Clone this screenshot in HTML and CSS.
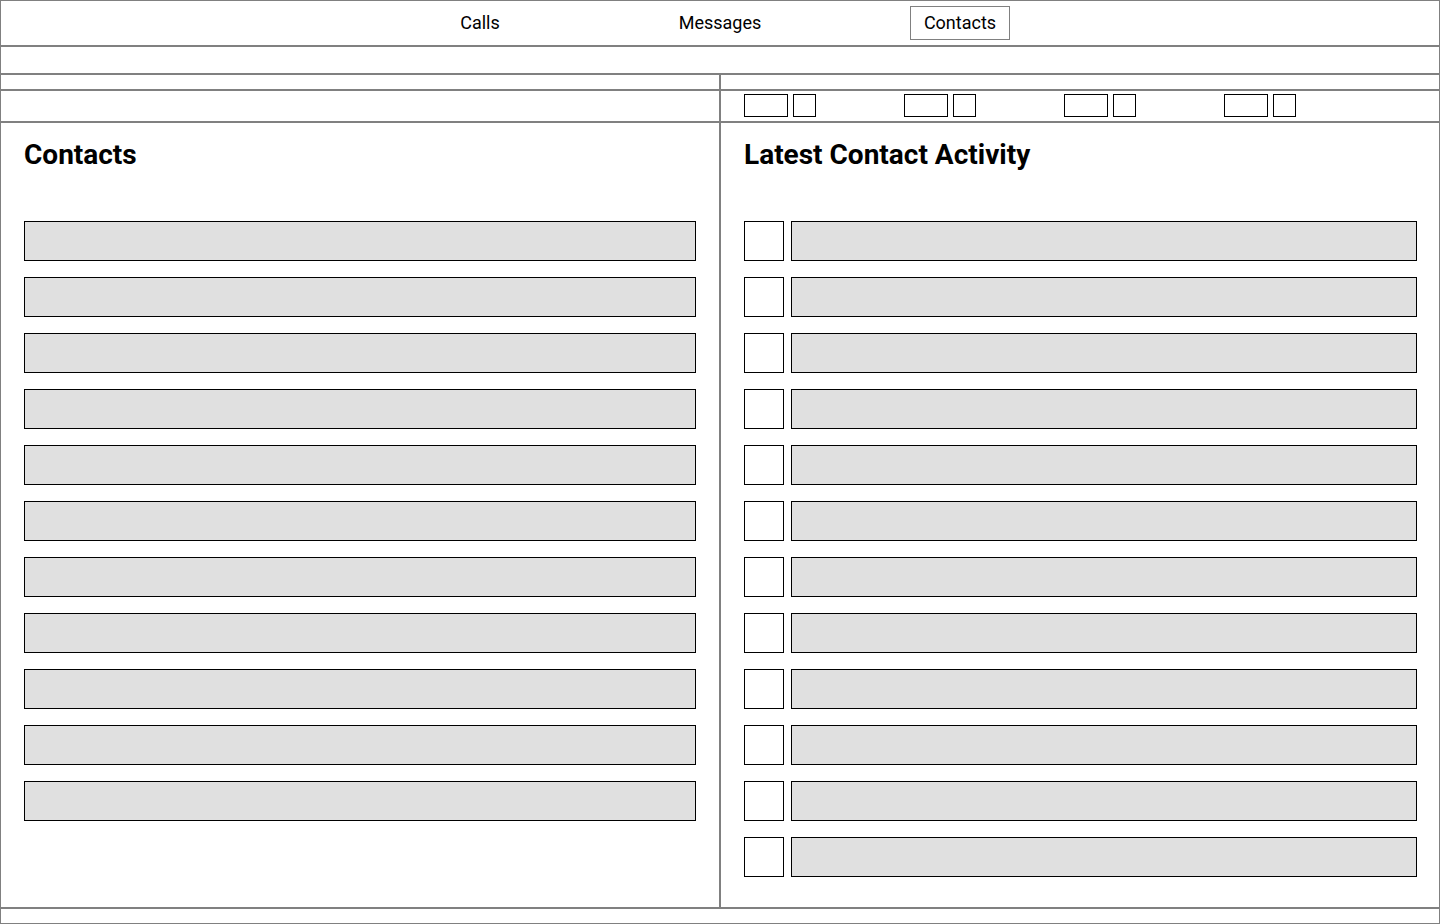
FILE: index.html
```html
<!DOCTYPE html>
<html lang="en">
<head>
<meta charset="utf-8">
<title>Contacts</title>
<link rel="stylesheet" href="styles.css">
</head>
<body>
<div class="page">
  <nav class="nav">
    <div class="nav-item"><span class="nav-label">Calls</span></div>
    <div class="nav-item"><span class="nav-label">Messages</span></div>
    <div class="nav-item"><span class="nav-label active">Contacts</span></div>
  </nav>
  <div class="band band-empty"></div>
  <div class="split band-thin">
    <div class="cell"></div>
    <div class="cell"></div>
  </div>
  <div class="split band-tools">
    <div class="cell"></div>
    <div class="cell tools">
      <div class="tool-group"><span class="tool tool-wide"></span><span class="tool tool-sq"></span></div>
      <div class="tool-group"><span class="tool tool-wide"></span><span class="tool tool-sq"></span></div>
      <div class="tool-group"><span class="tool tool-wide"></span><span class="tool tool-sq"></span></div>
      <div class="tool-group"><span class="tool tool-wide"></span><span class="tool tool-sq"></span></div>
    </div>
  </div>
  <main class="split main">
    <section class="cell panel panel-left">
      <h2 class="panel-title">Contacts</h2>
      <div class="list">
        <div class="bar"></div><div class="bar"></div><div class="bar"></div><div class="bar"></div>
        <div class="bar"></div><div class="bar"></div><div class="bar"></div><div class="bar"></div>
        <div class="bar"></div><div class="bar"></div><div class="bar"></div>
      </div>
    </section>
    <section class="cell panel panel-right">
      <h2 class="panel-title">Latest Contact Activity</h2>
      <div class="list">
        <div class="activity"><div class="avatar"></div><div class="bar"></div></div>
        <div class="activity"><div class="avatar"></div><div class="bar"></div></div>
        <div class="activity"><div class="avatar"></div><div class="bar"></div></div>
        <div class="activity"><div class="avatar"></div><div class="bar"></div></div>
        <div class="activity"><div class="avatar"></div><div class="bar"></div></div>
        <div class="activity"><div class="avatar"></div><div class="bar"></div></div>
        <div class="activity"><div class="avatar"></div><div class="bar"></div></div>
        <div class="activity"><div class="avatar"></div><div class="bar"></div></div>
        <div class="activity"><div class="avatar"></div><div class="bar"></div></div>
        <div class="activity"><div class="avatar"></div><div class="bar"></div></div>
        <div class="activity"><div class="avatar"></div><div class="bar"></div></div>
        <div class="activity"><div class="avatar"></div><div class="bar"></div></div>
      </div>
    </section>
  </main>
  <footer class="band footer"></footer>
</div>
</body>
</html>
```
FILE: styles.css
```css
* { box-sizing: border-box; }
html, body { margin: 0; padding: 0; background: #fff; }
body { font-family: Roboto, "Noto Sans", "Liberation Sans", sans-serif; color: #000; }

.page {
  width: 1440px;
  height: 924px;
  display: flex;
  flex-direction: column;
}

.nav {
  height: 46px;
  border: 1px solid #808080;
  display: flex;
  justify-content: center;
  align-items: center;
}
.nav-item {
  width: 240px;
  display: flex;
  justify-content: center;
  align-items: center;
}
.nav-label {
  font-size: 18px;
  line-height: 22px;
}
.nav-label.active {
  width: 100px;
  height: 34px;
  border: 1px solid #808080;
  display: flex;
  justify-content: center;
  align-items: center;
}

.band { border: 1px solid #808080; }
.band-empty { height: 28px; }
.footer { height: 16px; }

.split {
  display: grid;
  grid-template-columns: 720px 720px;
}
.cell { border: 1px solid #808080; }
.band-thin { height: 16px; }
.band-tools { height: 32px; }

.tools {
  display: flex;
  align-items: flex-start;
  padding: 3px 0 0 23px;
}
.tool-group {
  width: 160px;
  display: flex;
  gap: 5px;
}
.tool {
  display: block;
  height: 23px;
  border: 1px solid #000;
  background: #fff;
}
.tool-wide { width: 44px; }
.tool-sq { width: 23px; }

.main { height: 786px; }

.panel { padding: 16px 23px 0 23px; }
.panel-right { padding-right: 22px; }

.panel-title {
  margin: 0;
  font-size: 28px;
  line-height: 32px;
  font-weight: 700;
  height: 82px;
}

.list {
  display: flex;
  flex-direction: column;
  gap: 16px;
}
.bar {
  height: 40px;
  background: #e0e0e0;
  border: 1px solid #000;
}
.activity {
  display: flex;
  gap: 7px;
}
.activity .bar { flex: 1; }
.avatar {
  width: 40px;
  height: 40px;
  border: 1px solid #000;
  background: #fff;
  flex: none;
}
```
